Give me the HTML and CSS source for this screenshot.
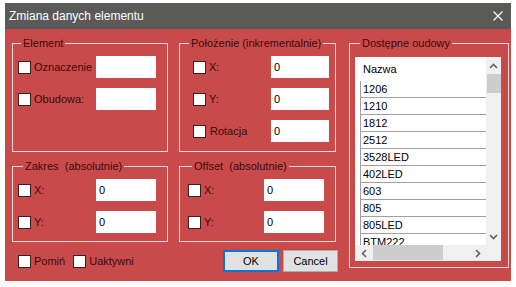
FILE: index.html
```html
<!DOCTYPE html>
<html lang="pl">
<head>
    <meta charset="UTF-8">
    <title>Zmiana danych elementu</title>
    <link rel="stylesheet" href="styles.css">
</head>
<body>
    <div class="dialog">
        <div class="titlebar">
            <span class="title">Zmiana danych elementu</span>
            <svg class="close" width="10" height="10" viewBox="0 0 10 10">
                <path d="M0.5 0.5 L9.5 9.5 M9.5 0.5 L0.5 9.5" stroke="#fff" stroke-width="1.2" fill="none"/>
            </svg>
        </div>
        <div class="dialog-body">
            <div class="left-panel">
                <div class="groups">
                    <div class="group group-element">
                        <span class="group-title">Element</span>
                        <label class="field"><input type="checkbox" class="check"><span>Oznaczenie</span><input type="text" class="text-input" value=""></label>
                        <label class="field"><input type="checkbox" class="check"><span>Obudowa:</span><input type="text" class="text-input" value=""></label>
                    </div>
                    <div class="group group-position">
                        <span class="group-title">Położenie (inkrementalnie)</span>
                        <label class="field"><input type="checkbox" class="check"><span>X:</span><input type="text" class="text-input" value="0"></label>
                        <label class="field"><input type="checkbox" class="check"><span>Y:</span><input type="text" class="text-input" value="0"></label>
                        <label class="field"><input type="checkbox" class="check check-wide"><span>Rotacja</span><input type="text" class="text-input" value="0"></label>
                    </div>
                    <div class="group group-range">
                        <span class="group-title">Zakres&nbsp; (absolutnie)</span>
                        <label class="field"><input type="checkbox" class="check"><span>X:</span><input type="text" class="text-input" value="0"></label>
                        <label class="field"><input type="checkbox" class="check"><span>Y:</span><input type="text" class="text-input" value="0"></label>
                    </div>
                    <div class="group group-offset">
                        <span class="group-title">Offset&nbsp; (absolutnie)</span>
                        <label class="field"><input type="checkbox" class="check"><span>X:</span><input type="text" class="text-input" value="0"></label>
                        <label class="field"><input type="checkbox" class="check"><span>Y:</span><input type="text" class="text-input" value="0"></label>
                    </div>
                </div>
                <div class="footer">
                    <label class="option"><input type="checkbox" class="check"><span>Pomiń</span></label>
                    <label class="option"><input type="checkbox" class="check"><span>Uaktywni</span></label>
                    <div class="buttons">
                        <button class="button button-ok">OK</button>
                        <button class="button button-cancel">Cancel</button>
                    </div>
                </div>
            </div>

            <div class="group group-list">
                <span class="group-title">Dostępne oudowy</span>
                <div class="listbox">
                    <div class="list-view">
                        <div class="list-header">Nazwa</div>
                        <div class="list-rows">
                            <div class="list-row">1206</div>
                            <div class="list-row">1210</div>
                            <div class="list-row">1812</div>
                            <div class="list-row">2512</div>
                            <div class="list-row">3528LED</div>
                            <div class="list-row">402LED</div>
                            <div class="list-row">603</div>
                            <div class="list-row">805</div>
                            <div class="list-row">805LED</div>
                            <div class="list-row">BTM222</div>
                        </div>
                    </div>
                    <div class="vscroll">
                        <div class="scroll-btn">
                            <svg width="9" height="6" viewBox="0 0 9 6"><polyline points="1,5 4.5,1.5 8,5" fill="none" stroke="#606060" stroke-width="1.6"/></svg>
                        </div>
                        <div class="vthumb"></div>
                        <div class="scroll-btn scroll-btn-end">
                            <svg width="9" height="6" viewBox="0 0 9 6"><polyline points="1,1 4.5,4.5 8,1" fill="none" stroke="#606060" stroke-width="1.6"/></svg>
                        </div>
                    </div>
                    <div class="hscroll">
                        <div class="scroll-btn">
                            <svg width="6" height="9" viewBox="0 0 6 9"><polyline points="5,1 1.5,4.5 5,8" fill="none" stroke="#606060" stroke-width="1.6"/></svg>
                        </div>
                        <div class="hthumb"></div>
                        <div class="scroll-btn scroll-btn-end">
                            <svg width="6" height="9" viewBox="0 0 6 9"><polyline points="1,1 4.5,4.5 1,8" fill="none" stroke="#606060" stroke-width="1.6"/></svg>
                        </div>
                    </div>
                    <div class="corner"></div>
                </div>
            </div>
        </div>
    </div>
</body>
</html>
```

FILE: styles.css
```css
* {
    box-sizing: border-box;
}

body {
    margin: 0;
    background: #fff;
    font-family: "Liberation Sans", Arial, sans-serif;
    font-size: 11px;
    color: #3d0b0b;
}

/* Dialog window */
.dialog {
    width: 506px;
    height: 278px;
    margin: 3px 0 0 5px;
    background: #c94a4a;
}

.titlebar {
    height: 26px;
    display: flex;
    align-items: center;
    justify-content: space-between;
    padding: 0 8px 0 4px;
    background: #5a5a58;
    color: #fff;
    font-size: 12px;
}

.dialog-body {
    display: flex;
    gap: 13px;
    height: 252px;
    padding: 14px 0 0 7px;
}

.left-panel {
    width: 324px;
}

.groups {
    display: grid;
    grid-template-columns: 156px 157px;
    grid-template-rows: 109px 76px;
    gap: 14px 11px;
}

/* Group boxes */
.group {
    position: relative;
    border: 1px solid #f3d6d6;
    padding-top: 12px;
}

.group-title {
    position: absolute;
    top: -7px;
    left: 8px;
    padding: 0 2px;
    line-height: 13px;
    background: #c94a4a;
    white-space: nowrap;
}

.group-element,
.group-range {
    padding-left: 5px;
    padding-right: 11px;
}

.group-range .group-title {
    left: 10px;
}

.group-position {
    padding-left: 13px;
    padding-right: 6px;
}

.group-position .group-title {
    left: 9px;
}

.group-position .text-input {
    width: 58px;
}

.group-offset {
    padding-left: 8px;
    padding-right: 11px;
}

.group-offset .group-title {
    left: 12px;
}

.field {
    display: flex;
    align-items: center;
    height: 22px;
}

.field + .field {
    margin-top: 10px;
}

.check {
    appearance: none;
    flex: none;
    width: 13px;
    height: 13px;
    margin: 0 3px 0 0;
    background: #fff;
    border: 1px solid #3a2020;
}

.check-wide {
    margin-right: 4px;
}

.text-input {
    margin-left: auto;
    width: 60px;
    height: 22px;
    padding: 0 3px 1px;
    border: none;
    outline: none;
    background: #fff;
    font: 11px "Liberation Sans", Arial, sans-serif;
    color: #000;
}

/* Bottom row */
.footer {
    display: flex;
    align-items: center;
    width: 326px;
    height: 22px;
    margin-top: 8px;
    padding-left: 6px;
}

.option {
    display: flex;
    align-items: center;
}

.option + .option {
    margin-left: 8px;
}

.buttons {
    display: flex;
    gap: 4px;
    margin-left: auto;
}

.button {
    height: 22px;
    padding: 0;
    background: #e1e1e1;
    border: 1px solid #adadad;
    font: 11px "Liberation Sans", Arial, sans-serif;
    color: #000;
}

.button-ok {
    width: 56px;
    border-color: #0078d7;
    box-shadow: inset 0 0 0 1px #0078d7;
}

.button-cancel {
    width: 55px;
}

/* Package list */
.group-list {
    width: 160px;
    height: 225px;
    padding: 13px 0 0 5px;
}

.group-list .group-title {
    left: 10px;
}

.listbox {
    display: grid;
    grid-template-columns: 131px 15px;
    grid-template-rows: 188px 16px;
    width: 146px;
    height: 204px;
    background: #fff;
    color: #000;
}

.list-view {
    overflow: hidden;
}

.list-header {
    height: 24px;
    line-height: 24px;
    padding-left: 8px;
}

.list-rows {
    margin-left: 5px;
    border-left: 1px solid #a0a0a0;
}

.list-row {
    height: 17px;
    line-height: 16px;
    padding-left: 2px;
    border-bottom: 1px solid #a0a0a0;
}

.vscroll {
    display: flex;
    flex-direction: column;
    background: #f0f0f0;
}

.scroll-btn {
    display: flex;
    align-items: center;
    justify-content: center;
    height: 17px;
}

.vthumb {
    height: 19px;
    margin-left: 1px;
    background: #cdcdcd;
}

.vscroll .scroll-btn-end {
    margin-top: auto;
}

.hscroll {
    display: flex;
    background: #f0f0f0;
}

.hscroll .scroll-btn {
    width: 17px;
    height: auto;
}

.hthumb {
    width: 70px;
    margin: 0 0 1px 1px;
    background: #cdcdcd;
}

.hscroll .scroll-btn-end {
    margin-left: auto;
}

.corner {
    background: #f0f0f0;
}
```
